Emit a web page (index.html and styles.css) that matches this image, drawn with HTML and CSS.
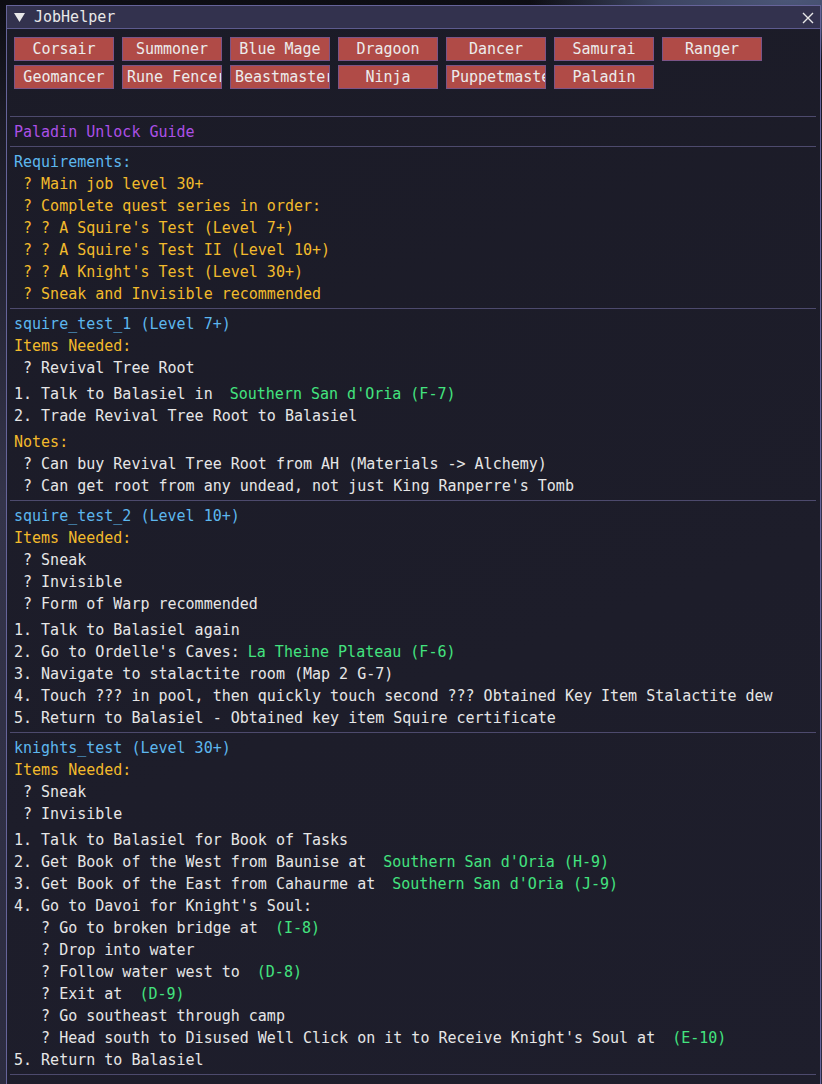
FILE: index.html
```html
<!DOCTYPE html>
<html>
<head>
<meta charset="utf-8">
<link rel="stylesheet" href="styles.css">
</head>
<body>
<div class="window">
  <div class="titlebar">
    <svg class="arrow" width="11" height="9" viewBox="0 0 11 9"><polygon points="0,0 11,0 5.5,9" fill="#e8e8e8"/></svg>
    <span class="title">JobHelper</span>
    <svg class="close" width="12" height="12" viewBox="0 0 12 12"><path d="M1 1 L11 11 M11 1 L1 11" stroke="#e8e8e8" stroke-width="1.4" fill="none"/></svg>
  </div>
  <div class="content">
    <div class="buttons">
      <div class="btn-row">
        <div class="btn">Corsair</div>
        <div class="btn">Summoner</div>
        <div class="btn">Blue Mage</div>
        <div class="btn">Dragoon</div>
        <div class="btn">Dancer</div>
        <div class="btn">Samurai</div>
        <div class="btn">Ranger</div>
      </div>
      <div class="btn-row">
        <div class="btn">Geomancer</div>
        <div class="btn">Rune Fencer</div>
        <div class="btn">Beastmaster</div>
        <div class="btn">Ninja</div>
        <div class="btn">Puppetmaster</div>
        <div class="btn">Paladin</div>
      </div>
    </div>
    <div class="sep top"></div>
    <div class="line purple">Paladin Unlock Guide</div>
    <div class="sep"></div>

    <div class="line blue">Requirements:</div>
    <div class="line yellow"> ? Main job level 30+</div>
    <div class="line yellow"> ? Complete quest series in order:</div>
    <div class="line yellow"> ? ? A Squire's Test (Level 7+)</div>
    <div class="line yellow"> ? ? A Squire's Test II (Level 10+)</div>
    <div class="line yellow"> ? ? A Knight's Test (Level 30+)</div>
    <div class="line yellow"> ? Sneak and Invisible recommended</div>
    <div class="sep"></div>

    <div class="line blue">squire_test_1 (Level 7+)</div>
    <div class="line yellow">Items Needed:</div>
    <div class="line"> ? Revival Tree Root</div>
    <div class="line spaced"><span>1. Talk to Balasiel in </span><span class="green">Southern San d'Oria (F-7)</span></div>
    <div class="line">2. Trade Revival Tree Root to Balasiel</div>
    <div class="line yellow spaced-tight">Notes:</div>
    <div class="line"> ? Can buy Revival Tree Root from AH (Materials -&gt; Alchemy)</div>
    <div class="line"> ? Can get root from any undead, not just King Ranperre's Tomb</div>
    <div class="sep"></div>

    <div class="line blue">squire_test_2 (Level 10+)</div>
    <div class="line yellow">Items Needed:</div>
    <div class="line"> ? Sneak</div>
    <div class="line"> ? Invisible</div>
    <div class="line"> ? Form of Warp recommended</div>
    <div class="line spaced">1. Talk to Balasiel again</div>
    <div class="line"><span>2. Go to Ordelle's Caves:</span><span class="green">La Theine Plateau (F-6)</span></div>
    <div class="line">3. Navigate to stalactite room (Map 2 G-7)</div>
    <div class="line">4. Touch ??? in pool, then quickly touch second ??? Obtained Key Item Stalactite dew</div>
    <div class="line">5. Return to Balasiel - Obtained key item Squire certificate</div>
    <div class="sep"></div>

    <div class="line blue">knights_test (Level 30+)</div>
    <div class="line yellow">Items Needed:</div>
    <div class="line"> ? Sneak</div>
    <div class="line"> ? Invisible</div>
    <div class="line spaced">1. Talk to Balasiel for Book of Tasks</div>
    <div class="line"><span>2. Get Book of the West from Baunise at </span><span class="green">Southern San d'Oria (H-9)</span></div>
    <div class="line"><span>3. Get Book of the East from Cahaurme at </span><span class="green">Southern San d'Oria (J-9)</span></div>
    <div class="line">4. Go to Davoi for Knight's Soul:</div>
    <div class="line"><span>   ? Go to broken bridge at </span><span class="green">(I-8)</span></div>
    <div class="line">   ? Drop into water</div>
    <div class="line"><span>   ? Follow water west to </span><span class="green">(D-8)</span></div>
    <div class="line"><span>   ? Exit at </span><span class="green">(D-9)</span></div>
    <div class="line">   ? Go southeast through camp</div>
    <div class="line"><span>   ? Head south to Disused Well Click on it to Receive Knight's Soul at </span><span class="green">(E-10)</span></div>
    <div class="line">5. Return to Balasiel</div>
    <div class="sep"></div>
  </div>
</div>
</body>
</html>
```

FILE: styles.css
```css
html, body {
  margin: 0;
  padding: 0;
  width: 822px;
  height: 1084px;
  overflow: hidden;
}

body {
  background:
    radial-gradient(ellipse 260px 60px at 790px 0px, #4b5677 0%, #3d4562 50%, rgba(20,20,30,0) 100%),
    linear-gradient(180deg, #0d0d13 0px, #1b1b26 120px, #34344a 500px, #2c2c40 1084px);
  font-family: "DejaVu Sans Mono", "Liberation Mono", monospace;
  font-size: 15px;
  color: #e8e8e8;
}

.window {
  box-sizing: border-box;
  margin: 5px 0 0 6px;
  width: 815px;
  height: 1100px;
  border: 1px solid #66649a;
  background: linear-gradient(160deg, #1b1b27 0%, #1d1d2a 60%, #1e1e2c 100%);
  display: flex;
  flex-direction: column;
}

.titlebar {
  height: 22px;
  border-bottom: 1px solid #5d5b8e;
  background: #33324e;
  display: flex;
  align-items: center;
  padding: 0 6px 0 7px;
}

.arrow {
  margin-top: 0px;
  flex: none;
}

.title {
  margin-left: 9px;
  line-height: 22px;
  color: #e8e8e8;
  flex: 1;
}

.close {
  flex: none;
  margin-top: 1px;
  margin-right: 0px;
}

.content {
  padding: 8px 7px 0 7px;
  display: flex;
  flex-direction: column;
}

.buttons {
  display: flex;
  flex-direction: column;
  gap: 4px;
}

.btn-row {
  display: flex;
  gap: 8px;
}

.btn {
  box-sizing: border-box;
  width: 100px;
  height: 24px;
  padding: 0 4px;
  line-height: 22px;
  border: 1px solid #7b5487;
  background: #b04b47;
  color: #ececec;
  text-align: center;
  white-space: nowrap;
  overflow: hidden;
}

.sep {
  height: 1px;
  background: #4d4a6d;
  margin: 3px -3px 4px -4px;
}

.sep.top {
  margin-top: 27px;
}

.line {
  height: 22px;
  line-height: 22px;
  white-space: pre;
  color: #e6e6e6;
  display: flex;
}

.line .green {
  margin-left: 8px;
}

.spaced, .spaced-tight {
  margin-top: 4px;
}

.purple { color: #ab50e6; }
.blue { color: #5db7ee; }
.yellow { color: #f2ba2c; }
.green { color: #43e37f; }
```
